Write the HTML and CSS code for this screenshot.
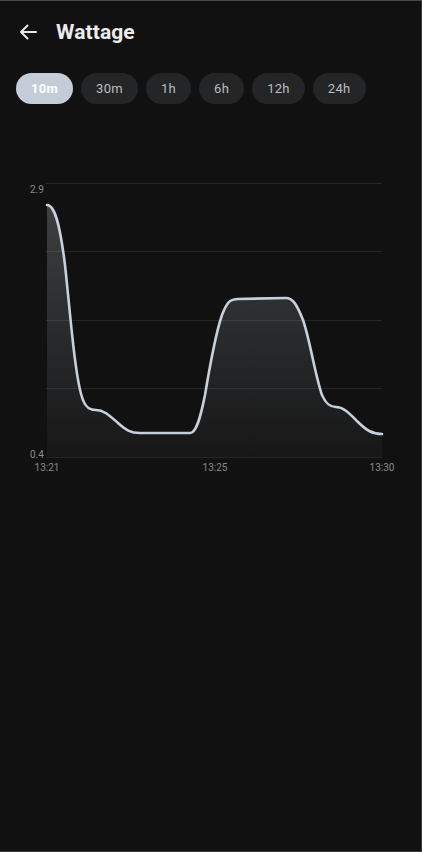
FILE: index.html
```html
<!DOCTYPE html>
<html lang="en">
<head>
  <meta charset="UTF-8">
  <title>Wattage</title>
  <link rel="stylesheet" href="styles.css">
</head>
<body>
  <div class="screen">
    <header class="top-bar">
      <button class="back-btn" aria-label="Back">
        <svg width="18" height="16" viewBox="0 0 18 16">
          <path d="M17 8H2M8.5 1.5L2 8l6.5 6.5" fill="none" stroke="#e8e8e8" stroke-width="2" stroke-linecap="round" stroke-linejoin="round"/>
        </svg>
      </button>
      <h1>Wattage</h1>
    </header>

    <div class="ranges">
      <span class="chip active">10m</span>
      <span class="chip">30m</span>
      <span class="chip">1h</span>
      <span class="chip">6h</span>
      <span class="chip">12h</span>
      <span class="chip">24h</span>
    </div>

    <div class="chart">
      <svg width="420" height="310" viewBox="0 170 420 310">
        <defs>
          <linearGradient id="area" gradientUnits="userSpaceOnUse" x1="0" y1="205" x2="0" y2="457">
            <stop offset="0" stop-color="#c8d0dc" stop-opacity="0.24"/>
            <stop offset="1" stop-color="#c8d0dc" stop-opacity="0.03"/>
          </linearGradient>
        </defs>
        <g stroke="#262626" stroke-width="1">
          <line x1="46" y1="183.5" x2="382" y2="183.5"/>
          <line x1="46" y1="251.5" x2="382" y2="251.5"/>
          <line x1="46" y1="320.5" x2="382" y2="320.5"/>
          <line x1="46" y1="388.5" x2="382" y2="388.5"/>
          <line x1="46" y1="457.5" x2="382" y2="457.5"/>
        </g>
        <path fill="url(#area)" d="M47,205 C55,205 60,225 65,265 C70,310 75,380 83,400 C86,408 90,410 96,410 C104,410 110,416 118,423 C126,430 130,433 140,433 L190,433 C196,433 200,420 205,395 C210,365 215,335 222,315 C227,302 230,299 238,299 L286,298 C293,298 297,305 303,320 C310,340 315,375 322,395 C326,404 330,407 336,407 C344,407 350,414 358,422 C366,430 372,434 382,434 L382,457 L47,457 Z"/>
        <path fill="none" stroke="#c8d0dc" stroke-width="2.6" stroke-linecap="round" stroke-linejoin="round" d="M47,205 C55,205 60,225 65,265 C70,310 75,380 83,400 C86,408 90,410 96,410 C104,410 110,416 118,423 C126,430 130,433 140,433 L190,433 C196,433 200,420 205,395 C210,365 215,335 222,315 C227,302 230,299 238,299 L286,298 C293,298 297,305 303,320 C310,340 315,375 322,395 C326,404 330,407 336,407 C344,407 350,414 358,422 C366,430 372,434 382,434"/>
        <g class="axis-label">
          <text x="30" y="193">2.9</text>
          <text x="30" y="458">0.4</text>
          <text x="47" y="471" text-anchor="middle">13:21</text>
          <text x="215" y="471" text-anchor="middle">13:25</text>
          <text x="382" y="471" text-anchor="middle">13:30</text>
        </g>
      </svg>
    </div>
  </div>
</body>
</html>
```

FILE: styles.css
```css
html, body {
  margin: 0;
  background: #111111;
}
body {
  font-family: Roboto, "Noto Sans", sans-serif;
  color: #e8e8e8;
}
.screen {
  box-sizing: border-box;
  width: 422px;
  height: 852px;
  border-top: 1px solid #4a4a4a;
  border-right: 1px solid #3a3a3a;
  border-bottom: 1px solid #3a3a3a;
  overflow: hidden;
}
.top-bar {
  display: flex;
  align-items: center;
  height: 30px;
  padding: 16px 0 0 19px;
}
.back-btn {
  background: none;
  border: none;
  padding: 0;
  width: 18px;
  height: 16px;
  margin-right: 19px;
  display: flex;
}
h1 {
  margin: 0;
  font-size: 21px;
  font-weight: 700;
  color: #ececec;
  letter-spacing: 0.1px;
}
.ranges {
  display: flex;
  gap: 8px;
  padding: 26px 0 0 16px;
}
.chip {
  height: 31px;
  line-height: 31px;
  padding: 0 15px;
  border-radius: 16px;
  background: #242527;
  color: #bdbdbd;
  font-size: 13px;
  letter-spacing: 0.3px;
}
.chip.active {
  background: #c4ccd8;
  color: #ffffff;
  font-weight: 700;
}
.chart {
  margin-top: 66px;
}
.chart svg {
  display: block;
}
.axis-label text {
  font-family: Roboto, "Noto Sans", sans-serif;
  font-size: 10px;
  fill: #8a8a8a;
}
```
